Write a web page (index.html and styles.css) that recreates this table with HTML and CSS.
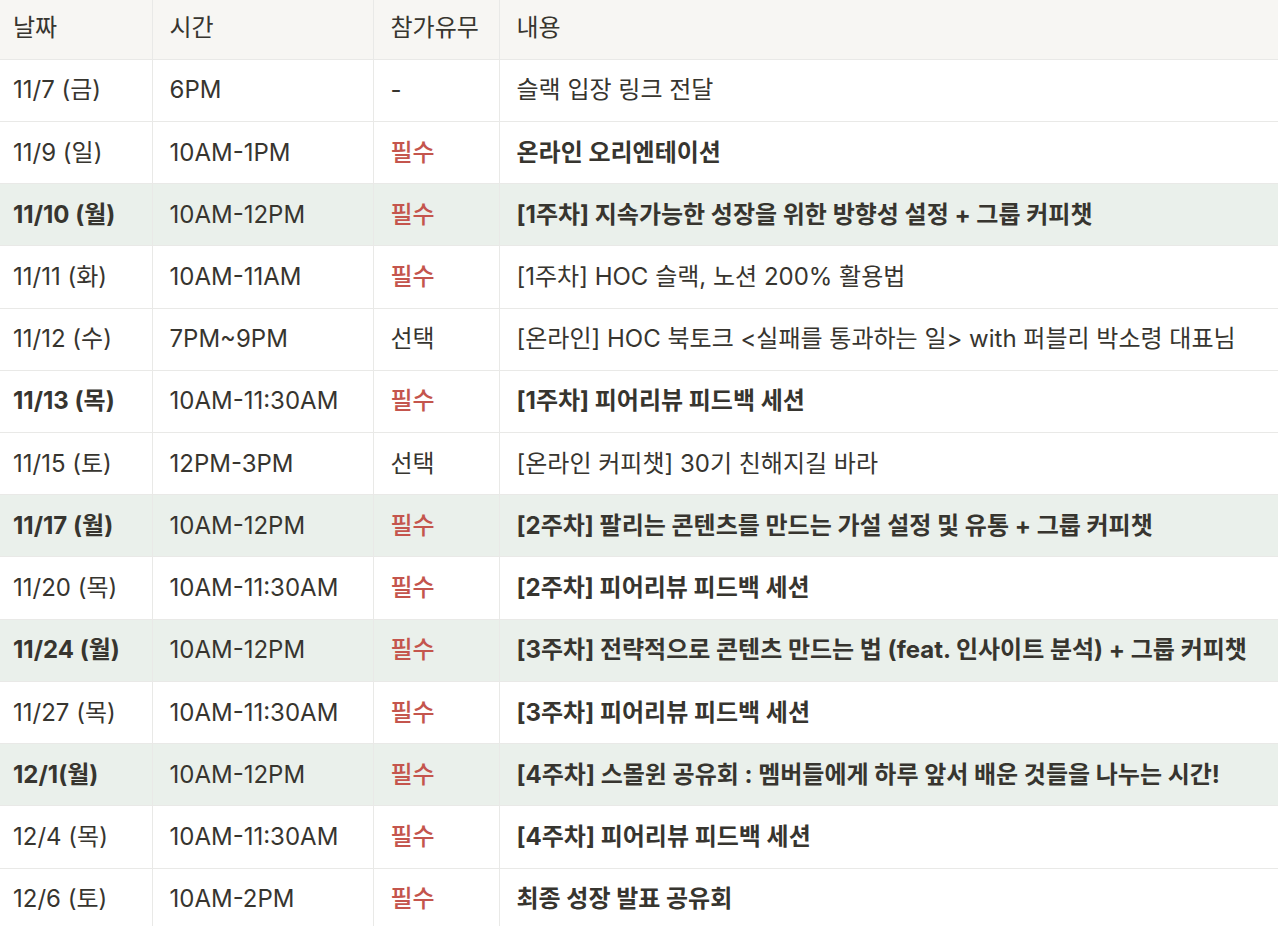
FILE: index.html
```html
<!DOCTYPE html>
<html lang="ko">
<head>
<meta charset="utf-8">
<link rel="stylesheet" href="styles.css">
</head>
<body>
<div class="wrap">
<table class="sched">
  <colgroup>
    <col class="c1"><col class="c2"><col class="c3"><col class="c4">
  </colgroup>
  <thead>
    <tr><th>날짜</th><th>시간</th><th>참가유무</th><th>내용</th></tr>
  </thead>
  <tbody>
    <tr><td>11/7 (금)</td><td>6PM</td><td>-</td><td>슬랙 입장 링크 전달</td></tr>
    <tr><td>11/9 (일)</td><td>10AM-1PM</td><td class="req">필수</td><td class="b">온라인 오리엔테이션</td></tr>
    <tr class="hl"><td class="b">11/10 (월)</td><td>10AM-12PM</td><td class="req">필수</td><td class="b">[1주차] 지속가능한 성장을 위한 방향성 설정 + 그룹 커피챗</td></tr>
    <tr><td>11/11 (화)</td><td>10AM-11AM</td><td class="req">필수</td><td>[1주차] HOC 슬랙, 노션 200% 활용법</td></tr>
    <tr><td>11/12 (수)</td><td>7PM~9PM</td><td>선택</td><td>[온라인] HOC 북토크 &lt;실패를 통과하는 일&gt; with 퍼블리 박소령 대표님</td></tr>
    <tr><td class="b">11/13 (목)</td><td>10AM-11:30AM</td><td class="req">필수</td><td class="b">[1주차] 피어리뷰 피드백 세션</td></tr>
    <tr><td>11/15 (토)</td><td>12PM-3PM</td><td>선택</td><td>[온라인 커피챗] 30기 친해지길 바라</td></tr>
    <tr class="hl"><td class="b">11/17 (월)</td><td>10AM-12PM</td><td class="req">필수</td><td class="b">[2주차] 팔리는 콘텐츠를 만드는 가설 설정 및 유통 + 그룹 커피챗</td></tr>
    <tr><td>11/20 (목)</td><td>10AM-11:30AM</td><td class="req">필수</td><td class="b">[2주차] 피어리뷰 피드백 세션</td></tr>
    <tr class="hl"><td class="b">11/24 (월)</td><td>10AM-12PM</td><td class="req">필수</td><td class="b">[3주차] 전략적으로 콘텐츠 만드는 법 (feat. 인사이트 분석) + 그룹 커피챗</td></tr>
    <tr><td>11/27 (목)</td><td>10AM-11:30AM</td><td class="req">필수</td><td class="b">[3주차] 피어리뷰 피드백 세션</td></tr>
    <tr class="hl"><td class="b">12/1(월)</td><td>10AM-12PM</td><td class="req">필수</td><td class="b">[4주차] 스몰윈 공유회 : 멤버들에게 하루 앞서 배운 것들을 나누는 시간!</td></tr>
    <tr><td>12/4 (목)</td><td>10AM-11:30AM</td><td class="req">필수</td><td class="b">[4주차] 피어리뷰 피드백 세션</td></tr>
    <tr><td>12/6 (토)</td><td>10AM-2PM</td><td class="req">필수</td><td class="b">최종 성장 발표 공유회</td></tr>
  </tbody>
</table>
</div>
</body>
</html>
```

FILE: styles.css
```css
html, body {
  margin: 0;
  padding: 0;
  background: #ffffff;
  overflow: hidden;
}
.wrap {
  margin-top: -3px;
  margin-left: -5px;
  width: 1400px;
}
.sched {
  border-collapse: collapse;
  table-layout: fixed;
  width: 1300px;
  font-family: Inter, "Noto Sans CJK KR", sans-serif;
  font-size: 24px;
  color: #37352f;
}
.c1 { width: 157px; }
.c2 { width: 221px; }
.c3 { width: 126px; }
.c4 { width: 796px; }
.sched th, .sched td {
  border: 1px solid #e9e9e7;
  height: 62.23px;
  box-sizing: border-box;
  padding: 0 17px 0 17px;
  text-align: left;
  vertical-align: middle;
  white-space: nowrap;
  overflow: hidden;
  line-height: 32px;
}
.sched th {
  font-weight: 400;
  background: #f7f6f3;
  border-top: none;
}
.sched td:first-child, .sched th:first-child { border-left: none; padding-left: 18px; }
.hl td { background: #eaf0eb; }
.b { font-weight: 700; }
.req { color: #c4554d; font-weight: 500; }
```
